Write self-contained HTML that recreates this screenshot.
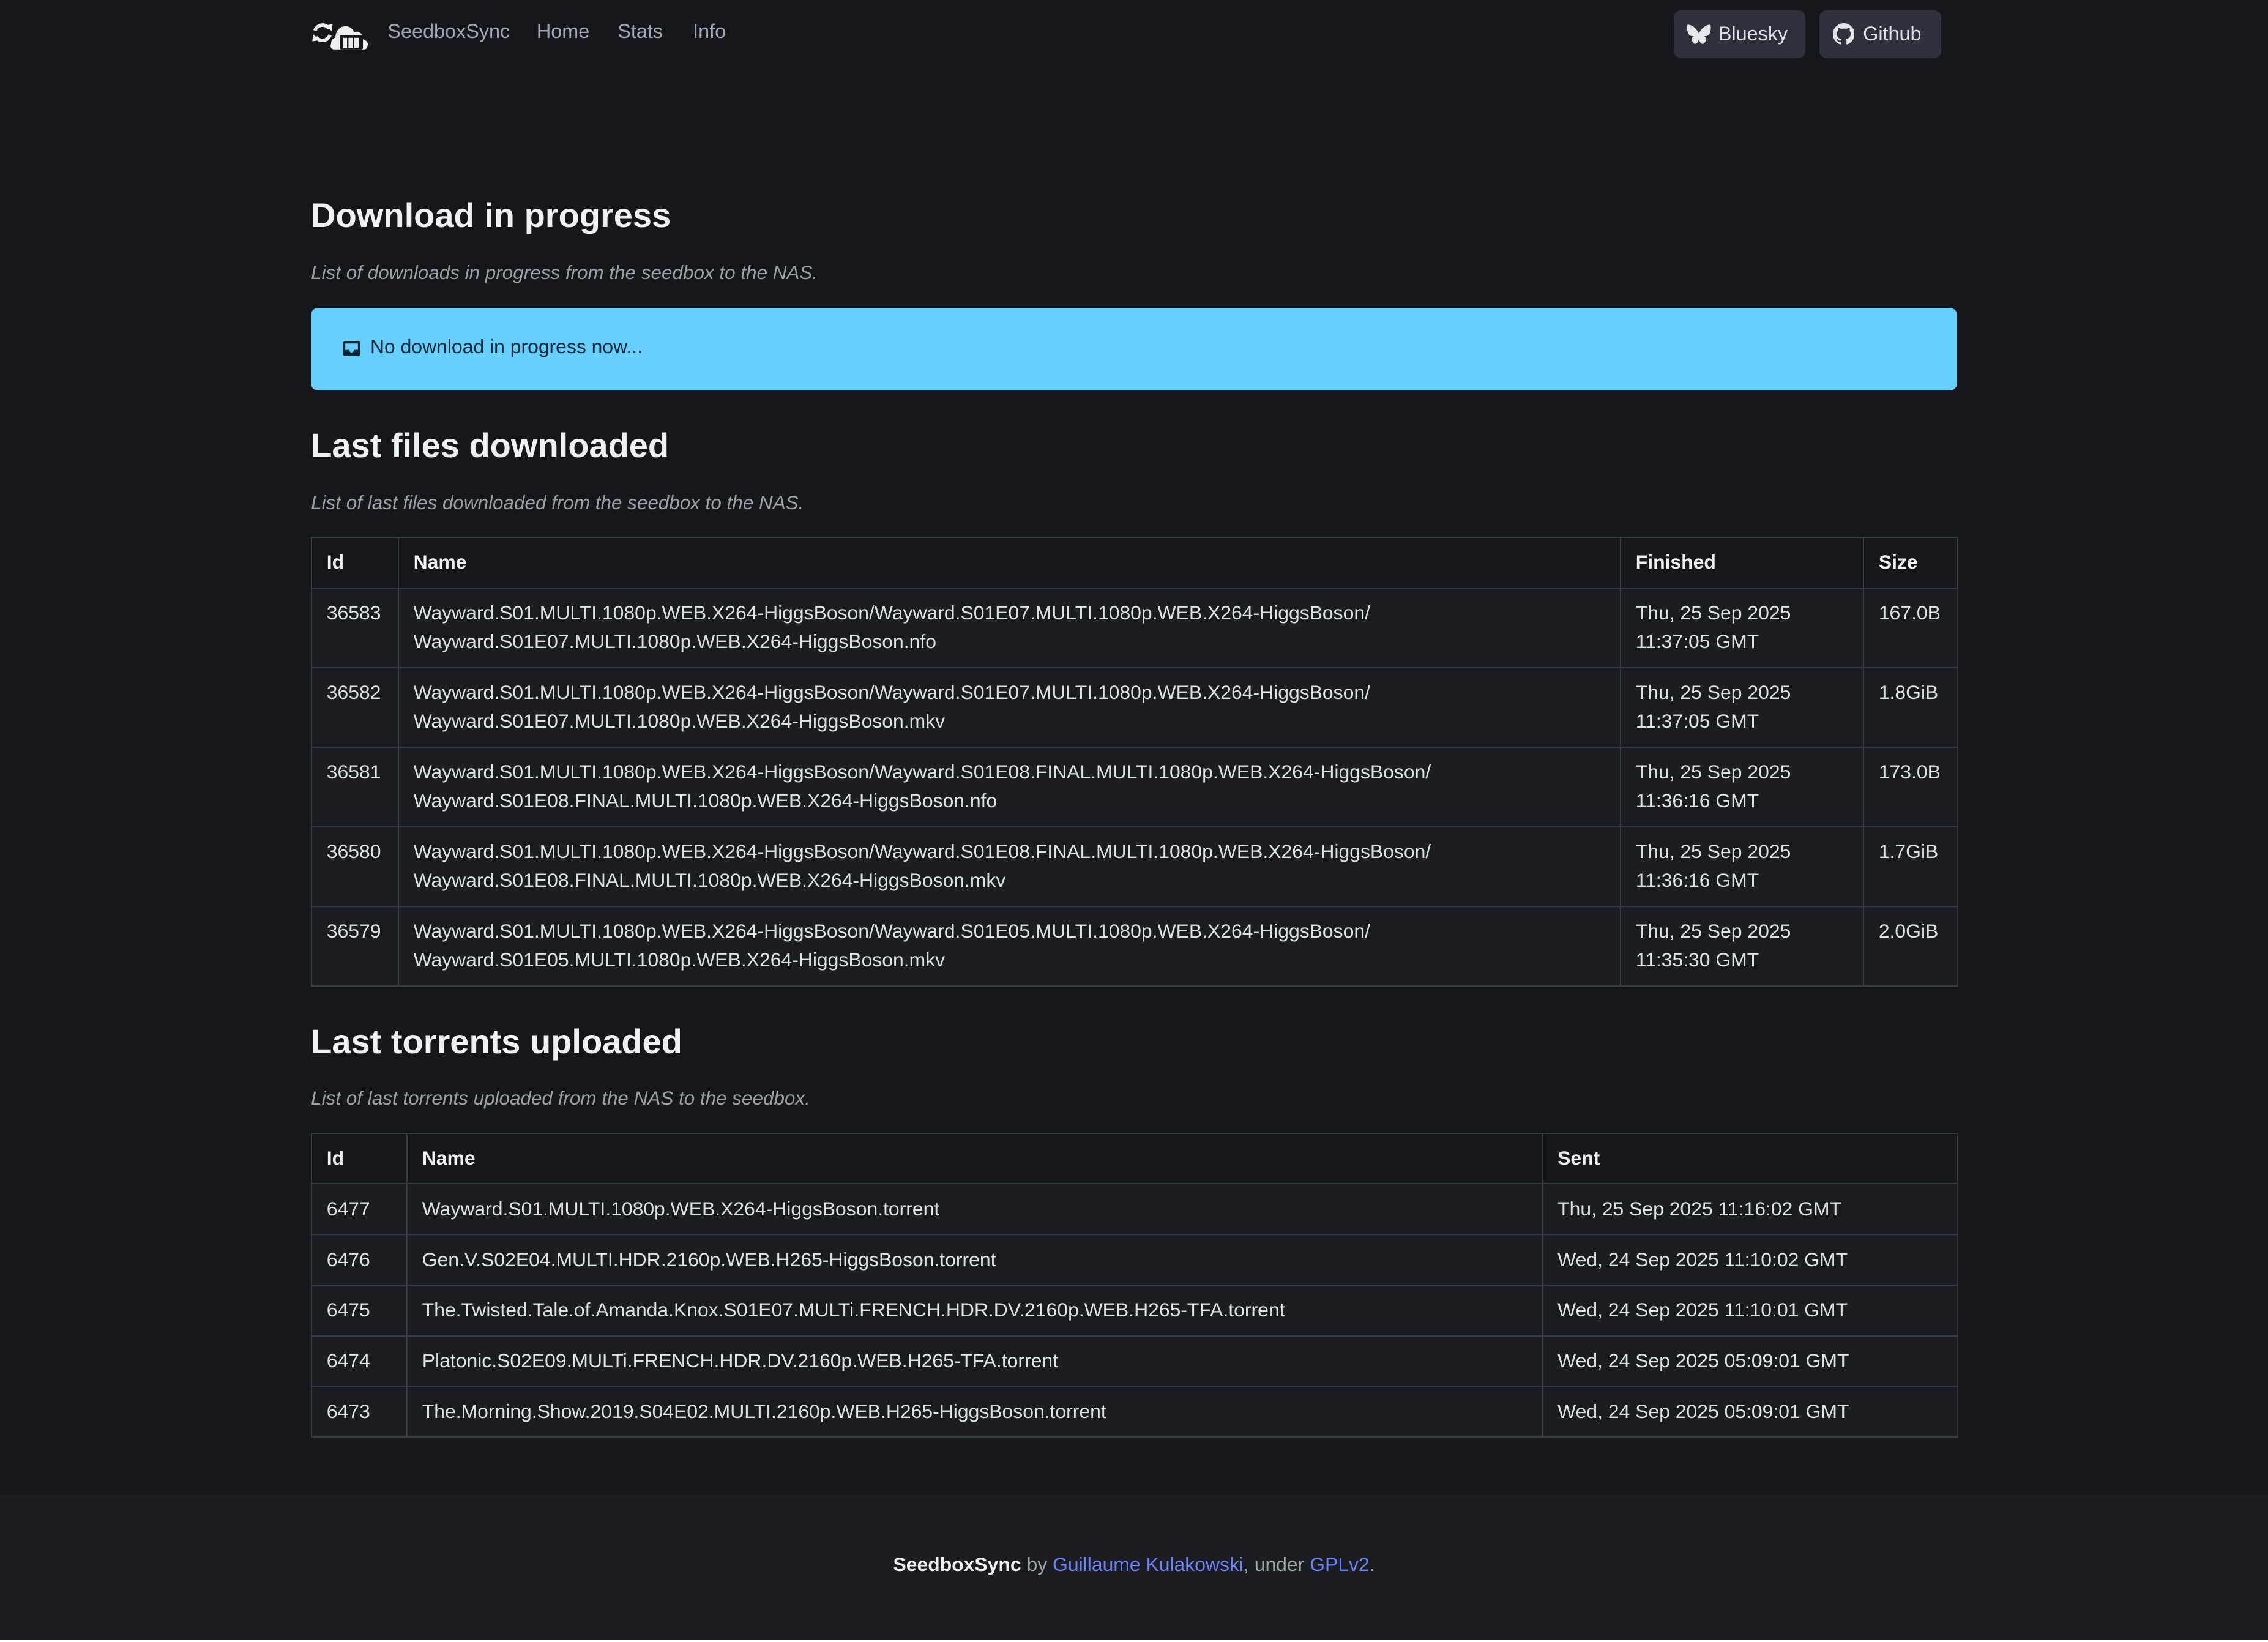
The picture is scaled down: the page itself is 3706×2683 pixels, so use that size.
<!DOCTYPE html>
<html><head><meta charset="utf-8"><style>
html{zoom:2.36352}
*{box-sizing:border-box;margin:0;padding:0}
body{width:1568px;height:1135px;background:#16171b;font-family:"Liberation Sans",sans-serif;color:#dee2e6;position:relative;overflow:hidden;font-size:13.5px}
.a{position:absolute}
.nav{color:#a3a7b3;font-size:13.7px;top:14px}
.btn{top:7px;height:33px;background:#2d323c;border-radius:5px;color:#dfe1e6;font-size:13.7px;display:flex;align-items:center;padding-left:9px}
h2{position:absolute;left:215px;font-size:23.7px;font-weight:bold;color:#eef0f3}
.sub{position:absolute;left:215px;font-style:italic;color:#9ba0a8;font-size:13.3px}
table{position:absolute;left:215px;width:1138px;border-collapse:collapse;table-layout:fixed}
td,th{border:1px solid #373b44;text-align:left;vertical-align:top;padding:7px 10px;line-height:20px;font-size:13.5px}
th{background:#16171b;color:#eef0f3;font-weight:bold;height:35px}
td{background:#1b1d22;color:#dee2e6}
.t1 td{height:55px}
.t2 td{height:35px}
</style></head><body>
<svg class="a" style="left:215px;top:10px" width="44" height="25" viewBox="0 0 44 25">
<path d="M12.5 9.5A5.5 5.5 0 0 0 2.8 11" stroke="#eee" stroke-width="2.4" fill="none"/>
<path d="M10 7.5l5 -1-0.5 5z" fill="#eee"/>
<path d="M3.5 15.5A5.5 5.5 0 0 0 13.2 14" stroke="#eee" stroke-width="2.4" fill="none"/>
<path d="M6 17.5l-5 1 0.5-5z" fill="#eee"/>
<path d="M16 24c-2 0-3-2-2-4 0-3 2-4 3-4 0-5 3-8 7-8 3 0 5 2 6 4 3-1 6 1 6 5 3 1 4 3 3 5 0 1-1 2-2 2z" fill="#eee"/>
<rect x="20" y="14" width="16" height="10" rx="1" fill="#16171b"/>
<rect x="22" y="16" width="3" height="7" fill="#eee"/><rect x="26" y="16" width="3" height="7" fill="#eee"/><rect x="30" y="16" width="3" height="7" fill="#eee"/>
</svg>
<div class="a nav" style="left:268px">SeedboxSync</div>
<div class="a nav" style="left:371px">Home</div>
<div class="a nav" style="left:427px">Stats</div>
<div class="a nav" style="left:479px">Info</div>
<div class="a btn" style="left:1157px;width:91px"><svg width="17" height="15" viewBox="0 0 17 15"><path d="M1 1c3 0 6 3 7.5 6C10 4 13 1 16 1c1 0 1 3 0 6-1 2-3 2-4 2 2 1 2 3 0 5-2 1-3-1-3.5-3C8 13 7 15 5 14c-2-2-2-4 0-5-1 0-3 0-4-2C0 4 0 1 1 1z" fill="#e4e5e9"/></svg><span style="margin-left:5px">Bluesky</span></div>
<div class="a btn" style="left:1258px;width:84px"><svg width="15" height="15" viewBox="0 0 16 16"><path fill="#e4e5e9" d="M8 0C3.58 0 0 3.58 0 8c0 3.54 2.29 6.53 5.47 7.59.4.07.55-.17.55-.38v-1.33c-2.23.48-2.7-1.07-2.7-1.07-.36-.92-.89-1.17-.89-1.17-.73-.5.06-.49.06-.49.8.06 1.23.83 1.23.83.72 1.22 1.87.87 2.33.66.07-.52.28-.87.51-1.07-1.78-.2-3.64-.89-3.64-3.95 0-.87.31-1.59.82-2.15-.08-.2-.36-1.02.08-2.12 0 0 .67-.21 2.2.82.64-.18 1.32-.27 2-.27.68 0 1.36.09 2 .27 1.53-1.04 2.2-.82 2.2-.82.44 1.1.16 1.92.08 2.12.51.56.82 1.27.82 2.15 0 3.07-1.87 3.75-3.65 3.95.29.25.54.73.54 1.48v2.2c0 .21.15.46.55.38A8.01 8.01 0 0 0 16 8c0-4.42-3.58-8-8-8z"/></svg><span style="margin-left:6px">Github</span></div>

<h2 style="top:135px">Download in progress</h2>
<div class="sub" style="top:181px">List of downloads in progress from the seedbox to the NAS.</div>
<div class="a" style="left:215px;top:213px;width:1138px;height:57px;background:#66cffe;border-radius:5px;color:#032838;font-size:13.5px;padding:19px 0 0 21px;display:flex;align-items:flex-start">
<svg width="14" height="14" viewBox="0 0 16 16" style="margin-top:2px"><rect x="1" y="2" width="14" height="12" rx="2" fill="#032838"/><path d="M3 4h10v5h-3l-1 2H7L6 9H3z" fill="#66cffe"/></svg><span style="margin-left:6px">No download in progress now...</span></div>

<h2 style="top:294px">Last files downloaded</h2>
<div class="sub" style="top:340px">List of last files downloaded from the seedbox to the NAS.</div>
<table class="t1" style="top:371px">
<colgroup><col style="width:60px"><col style="width:845px"><col style="width:168px"><col style="width:65px"></colgroup>
<tr><th>Id</th><th>Name</th><th>Finished</th><th>Size</th></tr>
<tr><td>36583</td><td>Wayward.S01.MULTI.1080p.WEB.X264-HiggsBoson/Wayward.S01E07.MULTI.1080p.WEB.X264-HiggsBoson/<br>Wayward.S01E07.MULTI.1080p.WEB.X264-HiggsBoson.nfo</td><td>Thu, 25 Sep 2025<br>11:37:05 GMT</td><td>167.0B</td></tr>
<tr><td>36582</td><td>Wayward.S01.MULTI.1080p.WEB.X264-HiggsBoson/Wayward.S01E07.MULTI.1080p.WEB.X264-HiggsBoson/<br>Wayward.S01E07.MULTI.1080p.WEB.X264-HiggsBoson.mkv</td><td>Thu, 25 Sep 2025<br>11:37:05 GMT</td><td>1.8GiB</td></tr>
<tr><td>36581</td><td>Wayward.S01.MULTI.1080p.WEB.X264-HiggsBoson/Wayward.S01E08.FINAL.MULTI.1080p.WEB.X264-HiggsBoson/<br>Wayward.S01E08.FINAL.MULTI.1080p.WEB.X264-HiggsBoson.nfo</td><td>Thu, 25 Sep 2025<br>11:36:16 GMT</td><td>173.0B</td></tr>
<tr><td>36580</td><td>Wayward.S01.MULTI.1080p.WEB.X264-HiggsBoson/Wayward.S01E08.FINAL.MULTI.1080p.WEB.X264-HiggsBoson/<br>Wayward.S01E08.FINAL.MULTI.1080p.WEB.X264-HiggsBoson.mkv</td><td>Thu, 25 Sep 2025<br>11:36:16 GMT</td><td>1.7GiB</td></tr>
<tr><td>36579</td><td>Wayward.S01.MULTI.1080p.WEB.X264-HiggsBoson/Wayward.S01E05.MULTI.1080p.WEB.X264-HiggsBoson/<br>Wayward.S01E05.MULTI.1080p.WEB.X264-HiggsBoson.mkv</td><td>Thu, 25 Sep 2025<br>11:35:30 GMT</td><td>2.0GiB</td></tr>
</table>

<h2 style="top:706px">Last torrents uploaded</h2>
<div class="sub" style="top:752px">List of last torrents uploaded from the NAS to the seedbox.</div>
<table class="t2" style="top:783px">
<colgroup><col style="width:66px"><col style="width:785px"><col style="width:287px"></colgroup>
<tr><th>Id</th><th>Name</th><th>Sent</th></tr>
<tr><td>6477</td><td>Wayward.S01.MULTI.1080p.WEB.X264-HiggsBoson.torrent</td><td>Thu, 25 Sep 2025 11:16:02 GMT</td></tr>
<tr><td>6476</td><td>Gen.V.S02E04.MULTI.HDR.2160p.WEB.H265-HiggsBoson.torrent</td><td>Wed, 24 Sep 2025 11:10:02 GMT</td></tr>
<tr><td>6475</td><td>The.Twisted.Tale.of.Amanda.Knox.S01E07.MULTi.FRENCH.HDR.DV.2160p.WEB.H265-TFA.torrent</td><td>Wed, 24 Sep 2025 11:10:01 GMT</td></tr>
<tr><td>6474</td><td>Platonic.S02E09.MULTi.FRENCH.HDR.DV.2160p.WEB.H265-TFA.torrent</td><td>Wed, 24 Sep 2025 05:09:01 GMT</td></tr>
<tr><td>6473</td><td>The.Morning.Show.2019.S04E02.MULTI.2160p.WEB.H265-HiggsBoson.torrent</td><td>Wed, 24 Sep 2025 05:09:01 GMT</td></tr>
</table>

<div class="a" style="left:0;top:1033px;width:1568px;height:101px;background:#1b1d21;text-align:center;padding-top:41px;color:#a3a7ae;font-size:13.5px">
<b style="color:#eef0f3">SeedboxSync</b> by <span style="color:#6e83f7">Guillaume Kulakowski</span>, under <span style="color:#6e83f7">GPLv2</span>.</div>
<div class="a" style="left:0;top:1134px;width:1568px;height:1px;background:#fff"></div>
</body></html>
